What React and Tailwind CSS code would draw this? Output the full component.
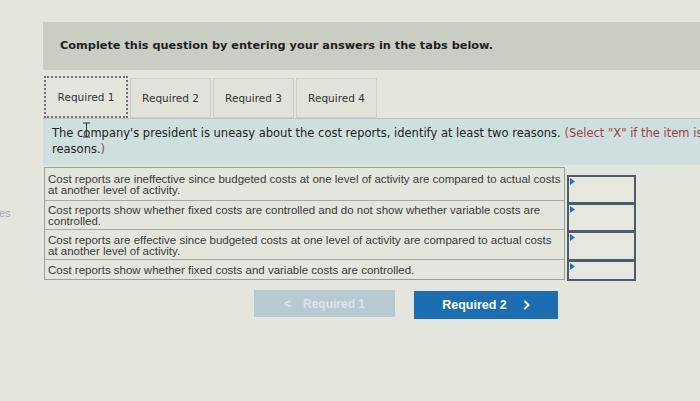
import React from 'react';

const rows = [
    { text: 'Cost reports are ineffective since budgeted costs at one level of activity are compared to actual costs at another level of activity.', h: 'h-[32px]' },
    { text: 'Cost reports show whether fixed costs are controlled and do not show whether variable costs are controlled.', h: 'h-[29px]' },
    { text: 'Cost reports are effective since budgeted costs at one level of activity are compared to actual costs at another level of activity.', h: 'h-[30px]' },
    { text: 'Cost reports show whether fixed costs and variable costs are controlled.', h: 'h-[20px]' },
];

const boxHeights = ['h-[29px]', 'h-[29px]', 'h-[30px]', 'h-[21px]'];

const tabs = ['Required 1', 'Required 2', 'Required 3', 'Required 4'];

const SelectBox = ({ h, first }) => (
    <div className={`relative ${h} w-[69px] border-2 border-[#4f5b69] bg-[#e6e8e0] ${first ? '' : '-mt-[1px]'}`}>
        <svg className="absolute left-[1px] top-[1px]" width="5" height="7" viewBox="0 0 5 7">
            <path d="M0 0 L5 3.5 L0 7 Z" fill="#2a6db0" />
        </svg>
    </div>
);

const App = () => {
    return (
        <div className="flex h-[401px] w-[700px] overflow-hidden bg-[#e4e6de] font-['DejaVu_Sans',sans-serif]">
            <div className="w-[43px] shrink-0 pt-[205px] font-['Liberation_Sans',sans-serif] text-[11px] text-[#9aa8b5]">
                <span className="-ml-[1px]">es</span>
            </div>

            <div className="w-[726px] shrink-0 pt-[22px]">
                <div className="flex h-[48px] items-center bg-[#cacdc3] pl-[17px]">
                    <p className="whitespace-nowrap text-[11.3px] font-bold text-[#1f1f1f]">
                        Complete this question by entering your answers in the tabs below.
                    </p>
                </div>

                <div className="mt-[6px] flex h-[42px] items-end gap-[2px] pl-[1px]">
                    {tabs.map((t, i) => (
                        <div
                            key={t}
                            className={
                                i === 0
                                    ? 'flex h-[42px] w-[84px] items-center justify-center border-2 border-dotted border-[#6b6f78] bg-[#e4e6de] pt-[1px] text-[10.5px] text-[#333]'
                                    : 'flex h-[40px] w-[81px] items-center justify-center border border-[#cdd0c7] bg-[#e1e3da] pt-[2px] text-[10.5px] text-[#333]'
                            }
                        >
                            {t}
                        </div>
                    ))}
                </div>

                <div className="relative h-[47px] border-t border-[#b8c8c6] bg-[#cde0de] pl-[9px] pt-[6px] text-[11.5px] leading-[16px] text-[#222]">
                    <p className="whitespace-nowrap">
                        The company's president is uneasy about the cost reports, identify at least two reasons.{' '}
                        <span className="text-[#a53a4c]">(Select "X" if the item is one of the</span>
                    </p>
                    <p className="text-[#222]">
                        reasons.<span className="text-[#a53a4c]">)</span>
                    </p>
                    <svg className="absolute left-[39px] top-[3px]" width="9" height="16" viewBox="0 0 9 16">
                        <path d="M1 1 H8 M4.5 1 V15 M1 15 H8" stroke="#333" strokeWidth="1" fill="none" />
                    </svg>
                </div>

                <div className="mt-[2px] flex items-start gap-[2px] pl-[1px]">
                    <div className="w-[521px] border border-[#9b9d98] font-['Liberation_Sans',sans-serif] text-[11.5px] leading-[11px] text-[#3a3a3a]">
                        {rows.map((r, i) => (
                            <div
                                key={i}
                                className={`${r.h} flex items-center pl-[3px] pr-[2px] pt-[2px] ${i > 0 ? 'border-t border-[#a7a9a4]' : ''}`}
                            >
                                <span>{r.text}</span>
                            </div>
                        ))}
                    </div>
                    <div className="mt-[8px] flex flex-col">
                        {boxHeights.map((h, i) => (
                            <SelectBox key={i} h={h} first={i === 0} />
                        ))}
                    </div>
                </div>

                <div className="mt-[9px] flex justify-center gap-[19px] font-['Liberation_Sans',sans-serif]">
                    <button className="flex h-[27px] w-[141px] items-center justify-center gap-[12px] bg-[#b7cad2] text-[12px] font-bold text-[#d9e5ea]">
                        <span>&lt;</span>
                        <span>Required 1</span>
                    </button>
                    <button className="mt-[1px] flex h-[28px] w-[144px] items-center justify-center gap-[16px] bg-[#1d6db3] text-[12.5px] font-bold text-white">
                        <span>Required 2</span>
                        <svg width="7" height="10" viewBox="0 0 7 10">
                            <path d="M1.5 1 L5.5 5 L1.5 9" stroke="white" strokeWidth="2" fill="none" />
                        </svg>
                    </button>
                </div>
            </div>
        </div>
    );
};

export default App;
